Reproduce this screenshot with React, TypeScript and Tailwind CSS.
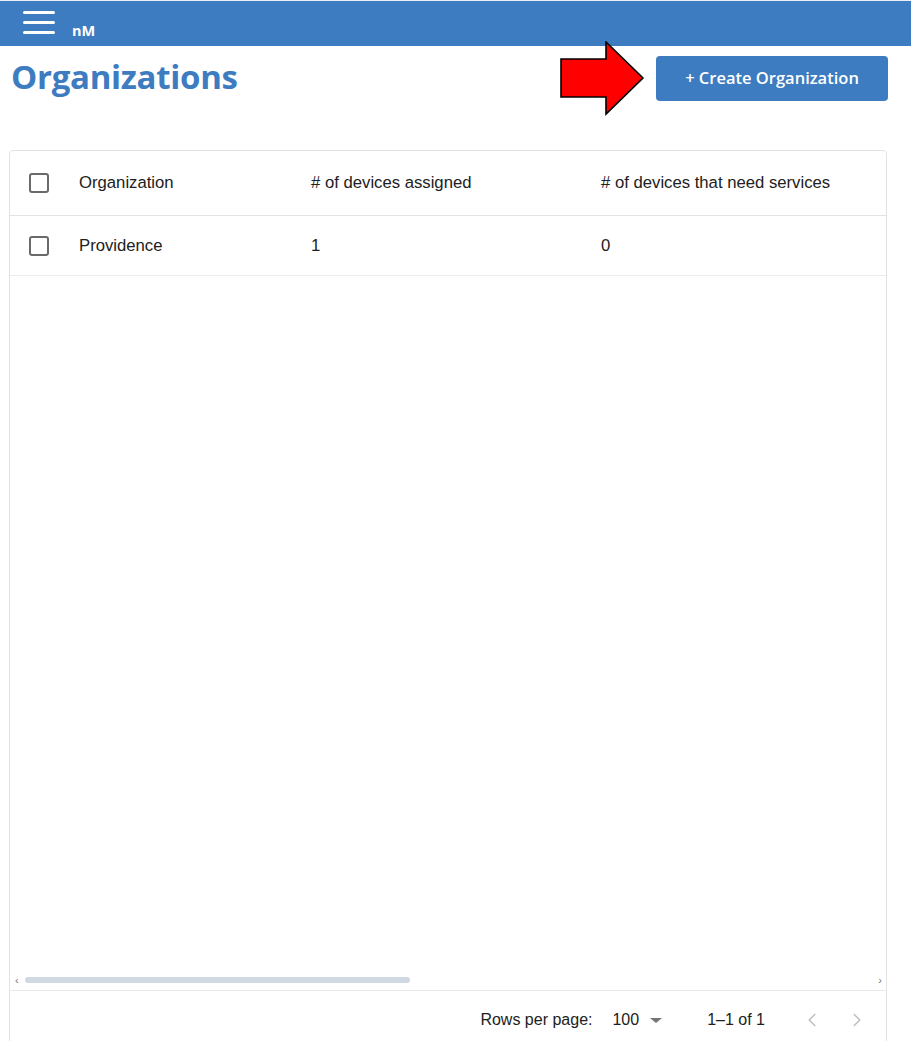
import { ChevronLeft, ChevronRight } from "lucide-react";

const blue = "bg-[#3d7cc0]";

function Checkbox() {
	return (
		<span className="block h-[20px] w-[20px] rounded-[3px] border-2 border-[#6a6a6a]" />
	);
}

function RedArrow() {
	return (
		<svg width="86" height="76" viewBox="0 0 86 76" className="shrink-0">
			<polygon
				points="1,18 46,18 46,1 83,37 46,73 46,56 1,56"
				fill="#ff0000"
				stroke="#000"
				strokeWidth="1.6"
				strokeLinejoin="miter"
			/>
		</svg>
	);
}

export default function App() {
	return (
		<div className="flex h-screen flex-col overflow-hidden bg-white font-['Liberation_Sans',Arial,sans-serif] text-[#212121]">
			{/* top bar */}
			<header
				className={`${blue} flex h-[46px] shrink-0 items-end border-t border-[#e8eef5] pb-[8px] pl-[23px]`}
			>
				<div className="mb-[4px] flex w-[32px] flex-col gap-[7px]">
					<span className="block h-[3px] w-full rounded-full bg-white" />
					<span className="block h-[3px] w-full rounded-full bg-white" />
					<span className="block h-[3px] w-full rounded-full bg-white" />
				</div>
				<span className="ml-[17px] font-['Open_Sans',sans-serif] text-[14.5px] leading-none font-bold text-white">
					nM
				</span>
			</header>

			{/* title row */}
			<div className="flex items-start justify-between pr-[23px] pl-[11px]">
				<h1 className="mt-[10px] font-['Open_Sans',sans-serif] text-[33px] leading-[42px] font-bold tracking-[-0.3px] text-[#3d7cc0]">
					Organizations
				</h1>
				<div className="mt-[-5px] flex items-start gap-[10px]">
					<RedArrow />
					<button
						className={`${blue} mt-[15px] h-[45px] w-[232px] rounded-[4px] font-['Open_Sans',sans-serif] text-[16.5px] font-semibold text-white`}
					>
						+ Create Organization
					</button>
				</div>
			</div>

			{/* table */}
			<div className="mt-[33px] mr-[24px] ml-[9px] flex h-[901px] shrink-0 flex-col rounded-t-[4px] border border-[#e3e3e3] text-[16.7px]">
				<div className="flex h-[65px] shrink-0 items-center border-b border-[#e3e3e3]">
					<div className="w-[69px] pl-[19px]">
						<Checkbox />
					</div>
					<div className="w-[232px]">Organization</div>
					<div className="w-[290px]"># of devices assigned</div>
					<div># of devices that need services</div>
				</div>
				<div className="flex h-[60px] shrink-0 items-center border-b border-[#ececec]">
					<div className="w-[69px] pl-[19px]">
						<Checkbox />
					</div>
					<div className="w-[232px]">Providence</div>
					<div className="w-[290px]">1</div>
					<div>0</div>
				</div>

				<div className="flex-1" />

				{/* horizontal scrollbar */}
				<div className="flex h-[14px] shrink-0 items-center gap-[6px] pr-[4px] pl-[5px] text-[#777]">
					<span className="text-[11px] leading-none">&lsaquo;</span>
					<span className="block h-[6px] w-[385px] rounded-full bg-[#d0d9e2]" />
					<span className="ml-auto text-[11px] leading-none">&rsaquo;</span>
				</div>
				<div className="mt-[3px] h-[60px] shrink-0 border-t border-[#e8e8e8]">
					<div className="flex h-[58px] items-center justify-end pr-[18px] text-[16px]">
						<span>Rows per page:</span>
						<span className="ml-[20px]">100</span>
						<span className="ml-[11px] h-0 w-0 border-t-[5px] border-r-[6px] border-l-[6px] border-t-[#757575] border-r-transparent border-l-transparent" />
						<span className="ml-[45px]">1–1 of 1</span>
						<ChevronLeft
							className="ml-[36px] text-[#bdbdbd]"
							size={22}
							strokeWidth={1.6}
						/>
						<ChevronRight
							className="ml-[23px] text-[#bdbdbd]"
							size={22}
							strokeWidth={1.6}
						/>
					</div>
				</div>
			</div>
		</div>
	);
}
